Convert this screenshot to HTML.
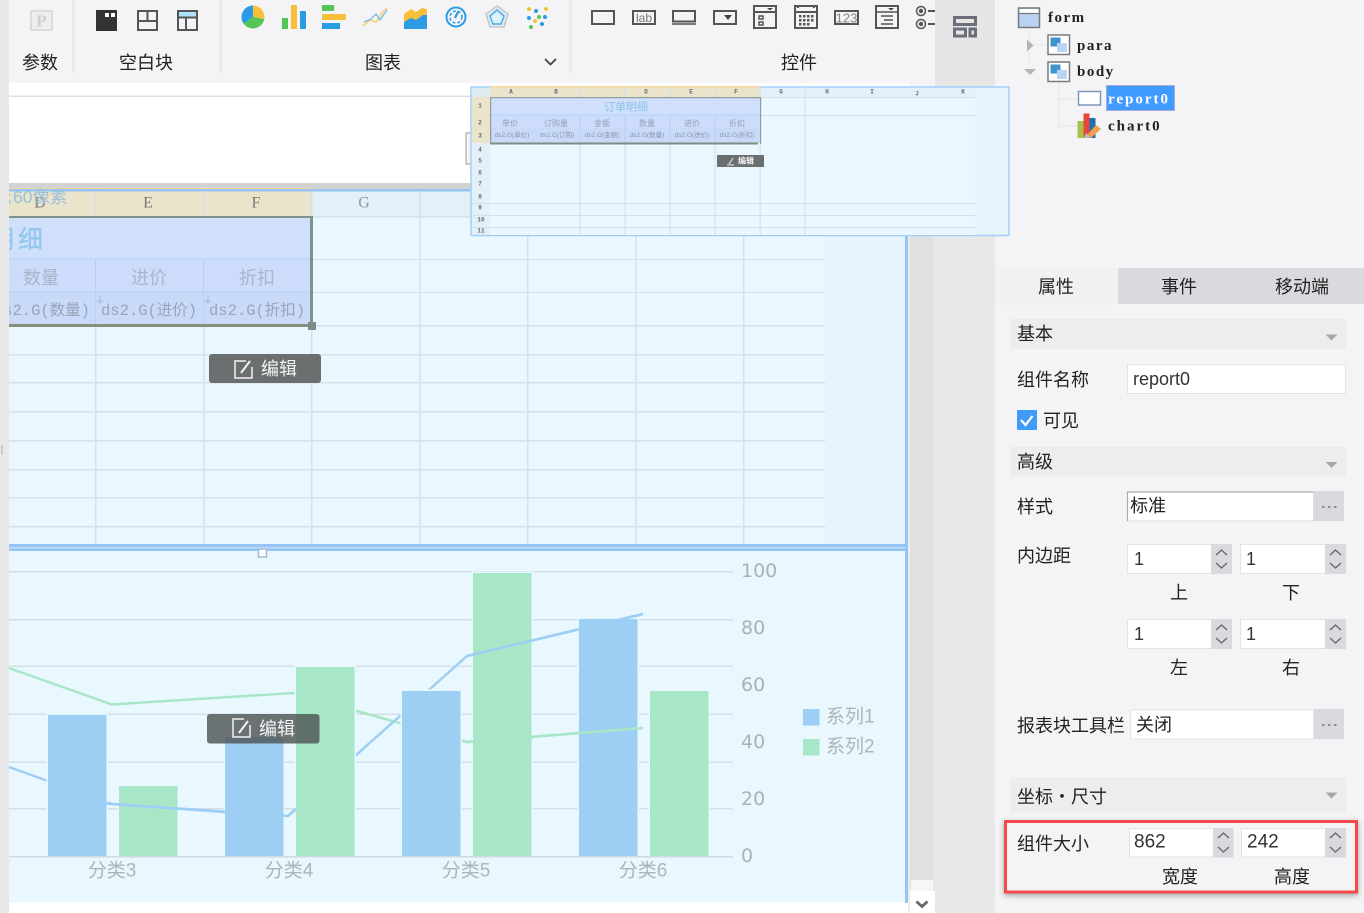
<!DOCTYPE html>
<html lang="zh">
<head>
<meta charset="utf-8">
<title>Form Designer</title>
<style>
html,body{margin:0;padding:0;width:1364px;height:913px;overflow:hidden;background:#f4f4f6}
svg{display:block;position:absolute;left:0;top:0}
text{font-family:"Liberation Sans","Noto Sans CJK SC",sans-serif;font-size:18px;fill:#222;dominant-baseline:central;transform:translateY(1px)}
.m{font-family:"Liberation Mono","Noto Sans CJK SC",monospace}
.c{text-anchor:middle}
.col{font-family:"Liberation Serif",serif;font-size:16px;text-anchor:middle}
.tree{font-family:"Liberation Serif",serif;font-size:15px;font-weight:bold;fill:#222;letter-spacing:2px}
.ax{font-family:"DejaVu Sans",sans-serif;font-size:19px;fill:#a9b2b8}
.lb{font-size:19px;fill:#adb5ba}
.hd{font-size:18px;fill:#a9b5c9}
.t6{font-size:6px;fill:#667;font-family:"Liberation Mono",monospace;font-weight:bold;text-anchor:middle}
.t7{font-size:6.500px;fill:#8896ad;text-anchor:middle}
.t9{font-size:8px;fill:#93a0b8;text-anchor:middle}
</style>
</head>
<body>
<svg width="1364" height="913" viewBox="0 0 1364 913" xmlns="http://www.w3.org/2000/svg">
<defs>
<clipPath id="cv"><rect x="9" y="180" width="900" height="400"/></clipPath>
<filter id="sh" x="-5%" y="-20%" width="110%" height="140%"><feDropShadow dx="0" dy="2" stdDeviation="3" flood-color="#000" flood-opacity=".35"/></filter>
</defs>

<!-- base -->
<rect width="1364" height="913" fill="#f4f4f6"/>
<rect x="0" y="0" width="9" height="913" fill="#e8e8e8"/>
<rect x="1" y="445" width="2" height="10" fill="#ccc"/>

<!-- toolbar -->
<rect x="9" y="0" width="926" height="83" fill="#f4f4f6"/>
<rect x="935" y="0" width="60" height="84" fill="#e6e6e6"/>
<rect x="72" y="0" width="3" height="73" fill="#ecece6"/>
<rect x="219" y="0" width="3" height="73" fill="#ecece6"/>
<rect x="569" y="0" width="3" height="73" fill="#ecece6"/>

<text x="40" y="62" class="c">参数</text>
<text x="146" y="62" class="c">空白块</text>
<text x="383" y="62" class="c">图表</text>
<text x="799" y="62" class="c">控件</text>
<path d="M545 59l5.500 5.500 5.500-5.500" fill="none" stroke="#444" stroke-width="1.800"/>

<!-- P -->
<rect x="31" y="11" width="21" height="19" fill="#eeeeee" stroke="#d4d4d4" stroke-width="1.500"/>
<text x="41.500" y="20" class="c" style="font-family:'Liberation Serif',serif;font-size:17px;font-weight:bold;fill:#cfcfcf">P</text>

<!-- blocks -->
<rect x="96" y="10" width="21" height="21" fill="#333"/>
<rect x="105" y="13" width="4" height="4" fill="#fff"/><rect x="111" y="13" width="4" height="4" fill="#fff"/>
<rect x="138" y="11" width="19" height="19" fill="none" stroke="#555" stroke-width="2"/>
<path d="M138 21h19M147.500 11v10" stroke="#555" stroke-width="2" fill="none"/>
<rect x="178" y="11" width="19" height="6" fill="#aee0f8"/>
<rect x="178" y="11" width="19" height="19" fill="none" stroke="#555" stroke-width="2"/>
<path d="M178 17.500h19M186 17.500V30" stroke="#555" stroke-width="2" fill="none"/>

<!-- chart icons -->
<path d="M253 17V5.500A11.500 11.500 0 0 1 264.300 19Z" fill="#f7bf3a"/>
<path d="M253 17l11.300 2A11.500 11.500 0 0 1 243.600 23.600Z" fill="#55c556"/>
<path d="M253 17l-9.400 6.600A11.500 11.500 0 0 1 253 5.500Z" fill="#2a9ce6"/>
<rect x="282" y="18" width="6" height="11" fill="#55c556"/>
<rect x="291" y="5" width="6" height="24" fill="#f7bf3a"/>
<rect x="300" y="11" width="6" height="18" fill="#2a9ce6"/>
<rect x="322" y="5" width="12" height="6" fill="#55c556"/>
<rect x="322" y="14" width="24" height="6" fill="#f7bf3a"/>
<rect x="322" y="23" width="18" height="6" fill="#2a9ce6"/>
<path d="M363 26l7-6 6 2 6-9 5-5" fill="none" stroke="#f7cf6a" stroke-width="1.500"/>
<path d="M364 22l7-3 5-5 4 6 7-10" fill="none" stroke="#6cbcec" stroke-width="1.300"/>
<path d="M404 18l7-4 5 2 7-8 4 4v17h-23Z" fill="#2a9ce6"/>
<path d="M404 14l7-5 5 3 6-4 5 1v6l-4 0-7 5-5-2-7 4Z" fill="#f7bf3a"/>
<circle cx="456" cy="17" r="9.500" fill="none" stroke="#2a9ce6" stroke-width="2"/>
<circle cx="456" cy="17" r="6" fill="none" stroke="#2a9ce6" stroke-width="1.500" stroke-dasharray="3 2"/>
<path d="M455 18l3.500-7" stroke="#2a9ce6" stroke-width="2.200"/>
<path d="M497 6l11 8-4 13h-14l-4-13Z" fill="#e4e8ec" stroke="#c2c8cc" stroke-width="1.500"/>
<path d="M497 10l7 6-3 8h-8l-3-8Z" fill="#dff1fb" stroke="#45b2e8" stroke-width="1.500"/>
<g>
<circle cx="529" cy="9" r="2" fill="#f7bf3a"/><circle cx="536" cy="11" r="2" fill="#2a9ce6"/><circle cx="546" cy="9" r="2" fill="#f7bf3a"/>
<circle cx="529" cy="18" r="2" fill="#2a9ce6"/><circle cx="539" cy="17" r="2" fill="#55c556"/><circle cx="545" cy="17" r="2" fill="#2a9ce6"/>
<circle cx="535" cy="21" r="2" fill="#f7bf3a"/><circle cx="542" cy="24" r="2" fill="#2a9ce6"/><circle cx="531" cy="27" r="2" fill="#55c556"/>
</g>

<!-- control icons -->
<g fill="none" stroke="#555" stroke-width="2">
<rect x="592" y="11" width="22" height="13"/>
<rect x="633" y="11" width="22" height="13"/>
<rect x="673" y="11" width="22" height="10.500"/>
<path d="M672 24h24" stroke-width="1.500"/>
<rect x="714" y="11" width="22" height="13"/>
<rect x="754" y="6" width="22" height="22"/>
<path d="M754 12h22"/>
<rect x="759" y="16" width="4" height="3" stroke-width="1.500"/><rect x="759" y="22" width="4" height="3" stroke-width="1.500"/>
<rect x="795" y="6" width="22" height="22"/>
<path d="M795 12h22"/>
<rect x="835" y="11" width="23" height="13"/>
<rect x="876" y="6" width="22" height="22"/>
<path d="M876 12h22M881 16h12M884 20h9M881 24h12" stroke-width="1.500"/>
<circle cx="921" cy="11" r="4.500" stroke-width="1.500"/>
<circle cx="921" cy="24" r="4.500" stroke-width="1.500"/>
<path d="M928 11h7M928 24h7"/>
</g>
<text x="644" y="17" class="c" style="font-size:12px;fill:#777">lab</text>
<path d="M724 15h8l-4 5Z" fill="#444"/>
<path d="M767 8h6l-3 2.500Z M888 8h6l-3 2.500Z" fill="#444"/>
<path d="M798 5v3M814 5v3" stroke="#555" stroke-width="2"/>
<g fill="#555">
<rect x="799" y="15" width="2.500" height="2.500"/><rect x="803" y="15" width="2.500" height="2.500"/><rect x="807" y="15" width="2.500" height="2.500"/><rect x="811" y="15" width="2.500" height="2.500"/>
<rect x="799" y="19" width="2.500" height="2.500"/><rect x="803" y="19" width="2.500" height="2.500"/><rect x="807" y="19" width="2.500" height="2.500"/><rect x="811" y="19" width="2.500" height="2.500"/>
<rect x="799" y="23" width="2.500" height="2.500"/><rect x="803" y="23" width="2.500" height="2.500"/><rect x="807" y="23" width="2.500" height="2.500"/>
<circle cx="921" cy="11" r="2.200"/><circle cx="921" cy="24" r="2.200"/>
</g>
<text x="846.500" y="17" class="c" style="font-size:13px;fill:#888">123</text>
<!-- layout icon -->
<g fill="none" stroke="#6c6f7a" stroke-width="3">
<rect x="954.500" y="17.500" width="21" height="7"/>
<rect x="954.500" y="29" width="11" height="7"/>
<rect x="970" y="29" width="5.500" height="7"/>
</g>

<!-- white design area -->
<rect x="9" y="83" width="899" height="830" fill="#fff"/>
<rect x="9" y="95.500" width="899" height="1.500" fill="#dedede"/>
<rect x="9" y="183" width="899" height="6" fill="#d2d2d2"/>
<rect x="908" y="84" width="25" height="829" fill="#e0e0e0"/>
<rect x="908" y="84" width="2" height="829" fill="#ececec"/>
<rect x="933" y="84" width="62" height="829" fill="#e8e8e8"/>
<rect x="995" y="268" width="123" height="37" fill="#f1f1f3"/>

<!-- report canvas -->
<rect x="9" y="189" width="896" height="356" fill="#eaf7fe"/>
<rect x="825" y="216" width="80" height="329" fill="#e6f3fb"/>
<rect x="9" y="191" width="302" height="25" fill="#e9e4ca"/>
<rect x="311" y="191" width="594" height="25" fill="#e3f0f7"/>
<rect x="9" y="188" width="302" height="2" fill="#f3d9a0"/>
<rect x="9" y="189" width="899" height="2.500" fill="#96c5f5"/>
<g fill="#d3e2e9">
<rect x="9" y="216" width="816" height="1.500"/>
<rect x="9" y="259" width="816" height="1"/>
<rect x="9" y="292" width="816" height="1"/>
<rect x="9" y="325" width="816" height="1.500"/>
<rect x="9" y="354" width="816" height="1.500"/>
<rect x="9" y="382" width="816" height="1.500"/>
<rect x="9" y="411" width="816" height="1.500"/>
<rect x="9" y="440" width="816" height="1.500"/>
<rect x="9" y="469" width="816" height="1.500"/>
<rect x="9" y="497" width="816" height="1.500"/>
<rect x="9" y="526" width="816" height="1.500"/>
<rect x="95" y="191" width="1.500" height="354"/>
<rect x="203" y="191" width="1.500" height="354"/>
<rect x="311" y="191" width="1.500" height="354"/>
<rect x="419" y="191" width="1.500" height="354"/>
<rect x="527" y="191" width="1.500" height="354"/>
<rect x="635" y="191" width="1.500" height="354"/>
<rect x="743" y="191" width="1.500" height="354"/>
</g>
<text x="40" y="202" class="col" style="fill:#777">D</text>
<text x="148" y="202" class="col" style="fill:#777">E</text>
<text x="256" y="202" class="col" style="fill:#777">F</text>
<text x="364" y="202" class="col" style="fill:#8a9aa2">G</text>

<!-- selected report block -->
<rect x="9" y="217" width="302" height="42" fill="#d0dffc"/>
<rect x="9" y="259" width="302" height="33" fill="#cddcfa"/>
<rect x="9" y="292" width="302" height="33" fill="#c9d9f8"/>
<path d="M9 259h302M9 292h302M95.500 259v66M203.500 259v66" stroke="#b6d0fb" stroke-width="1" fill="none"/>
<rect x="9" y="216" width="304" height="2" fill="#7f918d"/>
<rect x="310" y="216" width="3" height="110" fill="#7f918d"/>
<rect x="9" y="324" width="304" height="3" fill="#85907f"/>
<rect x="308" y="322" width="8" height="8" fill="#7f8a8a"/>
<g clip-path="url(#cv)">
<text x="-11" y="239" style="font-size:25px;fill:#93c9ec;font-weight:500">明</text>
<text x="18" y="239" style="font-size:25px;fill:#93c9ec;font-weight:500">细</text>
<text x="-6" y="196" style="font-size:17.500px;fill:#a4c6de">元</text>
<text x="90" y="310" class="m" text-anchor="end" style="font-size:15.500px;fill:#9aa4b8">ds2.G(数量)</text>
</g>
<text x="13" y="196" style="font-size:17.500px;fill:#9cc0dc">60像素</text>
<text x="41" y="277" class="c hd">数量</text>
<text x="149" y="277" class="c hd">进价</text>
<text x="257" y="277" class="c hd">折扣</text>
<text x="101" y="310" class="m" style="font-size:15.500px;fill:#9aa4b8">ds2.G(进价)</text>
<text x="209" y="310" class="m" style="font-size:15.500px;fill:#9aa4b8">ds2.G(折扣)</text>
<path d="M100 295v8M97 300l3 3 3-3M208 295v8M205 300l3 3 3-3" stroke="#a8c0e8" stroke-width="1.200" fill="none"/>

<!-- edit button 1 -->
<rect x="209" y="354" width="112" height="29" rx="3" fill="#6b6f70"/>
<path d="M246 361h-11v17h17v-11" fill="none" stroke="#f2f2f2" stroke-width="1.500"/>
<path d="M241 373l9-12" stroke="#f2f2f2" stroke-width="2"/>
<text x="279" y="368" class="c" style="fill:#f4f4f4">编辑</text>

<!-- divider -->
<rect x="9" y="544" width="899" height="3" fill="#96c5f5"/>
<rect x="9" y="547" width="899" height="1.500" fill="#c0dcf8"/>
<rect x="9" y="548.500" width="899" height="2.500" fill="#96c5f5"/>

<!-- chart canvas -->
<rect x="9" y="551" width="896" height="351.500" fill="#e9f7fe"/>
<g fill="#d2dfe6">
<rect x="9" y="571" width="724" height="1.500"/>
<rect x="9" y="619" width="724" height="1.500"/>
<rect x="9" y="665.500" width="724" height="1.500"/>
<rect x="9" y="713.500" width="724" height="1.500"/>
<rect x="9" y="761.500" width="724" height="1.500"/>
<rect x="9" y="808" width="724" height="1.500"/>
<rect x="9" y="856" width="724" height="1.500"/>
</g>
<polyline points="9,668 112,704.500 293,693 467,742 643,728" fill="none" stroke="#a8e6c8" stroke-width="2.500"/>
<polyline points="9,767 112,804 288,816 467,656 643,614" fill="none" stroke="#9dcff5" stroke-width="2.500"/>
<g stroke="#e9f7fe" stroke-width="3" paint-order="stroke">
<rect x="48" y="715" width="58.500" height="141.500" fill="#9dcff5"/>
<rect x="119" y="786" width="58.500" height="70.500" fill="#a8e6c8"/>
<rect x="225" y="737" width="58.500" height="119.500" fill="#9dcff5"/>
<rect x="296" y="667" width="58.500" height="189.500" fill="#a8e6c8"/>
<rect x="402" y="691" width="58.500" height="165.500" fill="#9dcff5"/>
<rect x="473" y="573" width="58.500" height="283.500" fill="#a8e6c8"/>
<rect x="579" y="619" width="58.500" height="237.500" fill="#9dcff5"/>
<rect x="650" y="691" width="58.500" height="165.500" fill="#a8e6c8"/>
</g>
<path d="M9 856.700h724" stroke="#cfdbe2" stroke-width="1.500"/>
<!-- line segments that sit above bars -->
<polyline points="106,803.600 112,804 225,812" fill="none" stroke="#9dcff5" stroke-width="2.500"/>
<polyline points="283,815.700 288,816 296,809" fill="none" stroke="#9dcff5" stroke-width="2.500"/>
<polyline points="467,656 643,614" fill="none" stroke="#9dcff5" stroke-width="2.500"/>
<polyline points="467,742 643,728" fill="none" stroke="#a8e6c8" stroke-width="2.500"/>

<text x="112" y="870" class="c lb">分类3</text>
<text x="289" y="870" class="c lb">分类4</text>
<text x="466" y="870" class="c lb">分类5</text>
<text x="643" y="870" class="c lb">分类6</text>
<text x="741" y="570" class="ax">100</text>
<text x="741" y="627" class="ax">80</text>
<text x="741" y="684" class="ax">60</text>
<text x="741" y="741" class="ax">40</text>
<text x="741" y="798" class="ax">20</text>
<text x="741" y="855" class="ax">0</text>
<rect x="803" y="709" width="16.500" height="16.500" fill="#9dcff5"/>
<rect x="803" y="739" width="16.500" height="16.500" fill="#a8e6c8"/>
<text x="826" y="716" class="lb">系列1</text>
<text x="826" y="746" class="lb">系列2</text>

<rect x="905" y="189" width="3" height="714" fill="#96c5f5"/>
<rect x="258.500" y="549" width="8" height="8" fill="#fff" stroke="#9fbcdc" stroke-width="1.500"/>

<!-- edit button 2 -->
<rect x="207" y="714" width="112.500" height="29.500" rx="3" fill="#4e5454" fill-opacity=".82"/>
<path d="M244 719h-11v18h17v-12" fill="none" stroke="#f2f2f2" stroke-width="1.500"/>
<path d="M239 733l9-12" stroke="#f2f2f2" stroke-width="2"/>
<text x="277" y="728" class="c" style="fill:#f4f4f4">编辑</text>

<!-- scroll -->
<rect x="911" y="880" width="22" height="11" fill="#f6f6f4"/>
<rect x="910" y="891" width="25" height="22" fill="#fff"/>
<path d="M916.500 901.500l5.500 5 5.500-5" fill="none" stroke="#666" stroke-width="2.800"/>

<!-- mini preview overlay -->
<rect x="466" y="133" width="8" height="31" fill="#f4f4f4" stroke="#aaa" stroke-width="1.200"/>
<rect x="471" y="83" width="438" height="4" fill="#fff"/>
<rect x="909" y="83" width="26" height="4" fill="#f4f4f6"/>
<rect x="471" y="87" width="538" height="148.500" fill="#e6f3fb" stroke="#a2cffa" stroke-width="1.500"/>
<rect x="490" y="97" width="485" height="138" fill="#ebf7fe"/>
<rect x="472" y="88" width="18" height="9" fill="#dcebf2"/>
<rect x="490" y="87" width="270" height="10" fill="#e9e4ca"/>
<rect x="760" y="88" width="215" height="9" fill="#e3f0f7"/>
<rect x="472" y="97" width="18" height="46" fill="#e9e4ca"/>
<rect x="472" y="143" width="18" height="91" fill="#e3f0f7"/>
<rect x="490" y="86" width="270" height="1.500" fill="#f3d9a0"/>
<g fill="#d3e2e9">
<rect x="760" y="97" width="215" height="1"/>
<rect x="760" y="115" width="215" height="1"/>
<rect x="472" y="203" width="503" height="1"/>
<rect x="472" y="215" width="503" height="1"/>
<rect x="472" y="227" width="503" height="1"/>
<rect x="579.500" y="87" width="1.200" height="148"/>
<rect x="624.500" y="87" width="1.200" height="148"/>
<rect x="669.500" y="87" width="1.200" height="148"/>
<rect x="714.500" y="87" width="1.200" height="148"/>
<rect x="759.500" y="87" width="1.200" height="148"/>
<rect x="804.500" y="87" width="1.200" height="148"/>
</g>
<rect x="490" y="98" width="270" height="17" fill="#d0dffc"/>
<rect x="490" y="115" width="270" height="13" fill="#cddcfa"/>
<rect x="490" y="128" width="270" height="15" fill="#c9d9f8"/>
<path d="M490 115h270M580 115v28M625 115v28M670 115v28M715 115v28" stroke="#b6d0fb" stroke-width="1" fill="none"/>
<rect x="490" y="97" width="271" height="1.200" fill="#8e9e9a"/>
<rect x="490" y="97" width="1.200" height="47" fill="#8e9e9a"/>
<rect x="760" y="97" width="1.200" height="47" fill="#8e9e9a"/>
<rect x="490" y="142.500" width="268" height="2" fill="#7f8f7f"/>
<text x="626" y="106.500" class="c" style="font-size:11px;fill:#8cc4e8">订单明细</text>
<text x="510" y="122.500" class="t9">单价</text><text x="556" y="122.500" class="t9">订购量</text><text x="602" y="122.500" class="t9">金额</text><text x="647" y="122.500" class="t9">数量</text><text x="692" y="122.500" class="t9">进价</text><text x="737" y="122.500" class="t9">折扣</text>
<text x="512" y="134.500" class="t7">ds2.G(单价)</text><text x="557" y="134.500" class="t7">ds2.G(订购)</text><text x="602" y="134.500" class="t7">ds2.G(金额)</text><text x="647" y="134.500" class="t7">ds2.G(数量)</text><text x="692" y="134.500" class="t7">ds2.G(进价)</text><text x="737" y="134.500" class="t7">ds2.G(折扣)</text>
<g>
<text x="511" y="91" class="t6">A</text><text x="556" y="91" class="t6">B</text><text x="646" y="91" class="t6">D</text><text x="691" y="91" class="t6">E</text><text x="736" y="91" class="t6">F</text>
<text x="781" y="91" class="t6">G</text><text x="827" y="91" class="t6">H</text><text x="872" y="91" class="t6">I</text><text x="917" y="93" class="t6">J</text><text x="963" y="91" class="t6">K</text>
<text x="480" y="105" class="t6">1</text><text x="480" y="122" class="t6">2</text><text x="480" y="135" class="t6">3</text><text x="480" y="149" class="t6">4</text><text x="480" y="160" class="t6">5</text><text x="480" y="172" class="t6">6</text><text x="480" y="183" class="t6">7</text><text x="480" y="196" class="t6">8</text><text x="480" y="207" class="t6">9</text><text x="481" y="219" class="t6">10</text><text x="481" y="230" class="t6">11</text>
</g>
<rect x="717" y="155" width="47" height="12" fill="#6b6f70"/>
<path d="M729 164l4-6M727 165h7" stroke="#f2f2f2" stroke-width="1"/>
<text x="746" y="160" class="c" style="font-size:8px;fill:#f4f4f4;font-weight:bold">编辑</text>

<!-- tree -->
<path d="M1029 30v34M1029 45h16M1059 83v45M1059 99h18M1059 126h18" stroke="#e4e4e6" stroke-width="1" fill="none"/>
<rect x="1018.500" y="8" width="21" height="19.500" fill="#b8d2f4" stroke="#7a7a7a" stroke-width="1.500"/>
<rect x="1019.500" y="9" width="19" height="4" fill="#fff"/>
<path d="M1019 13.500h20" stroke="#7a7a7a" stroke-width="1.200"/>
<text x="1048" y="17" class="tree" style="letter-spacing:1.500px">form</text>
<path d="M1027 39.500l6.500 6-6.500 6Z" fill="#b4b4b4"/>
<path d="M1024 69h12l-6 6Z" fill="#b4b4b4"/>
<g>
<rect x="1048" y="35" width="21.500" height="19.500" fill="#fff" stroke="#7a7a7a" stroke-width="1.500"/>
<rect x="1050.500" y="37.500" width="10" height="9" fill="#3d94cf"/><rect x="1057" y="43" width="10" height="9" fill="#bcd4f4"/>
<rect x="1048" y="62" width="21.500" height="19.500" fill="#fff" stroke="#7a7a7a" stroke-width="1.500"/>
<rect x="1050.500" y="64.500" width="10" height="9" fill="#3d94cf"/><rect x="1057" y="70" width="10" height="9" fill="#bcd4f4"/>
</g>
<text x="1077" y="45" class="tree" style="letter-spacing:1.500px">para</text>
<text x="1077" y="71" class="tree" style="letter-spacing:1.500px">body</text>
<rect x="1078.500" y="91.500" width="22" height="13.500" fill="#fff" stroke="#7d97bd" stroke-width="1.500"/>
<rect x="1106.500" y="85.500" width="68" height="25" fill="#3f9bff" stroke="#a9a9d8" stroke-width="1"/>
<text x="1108" y="98.500" class="tree" style="fill:#fff">report0</text>
<rect x="1077.500" y="121" width="7" height="17" fill="#a9c24a"/>
<rect x="1083.500" y="113.500" width="6" height="24" fill="#e8453c"/>
<rect x="1089.500" y="118" width="6" height="20" fill="#1f6fb4"/>
<path d="M1086 136l10-11 5 4-10 9Z" fill="#f2a04d"/>
<path d="M1084 138h7l-5-5Z" fill="#b9b9b9"/>
<text x="1108" y="125.500" class="tree">chart0</text>

<!-- tabs -->
<rect x="1118" y="268" width="246" height="36" fill="#d9dade"/>
<text x="1056" y="286" class="c">属性</text>
<text x="1179" y="286" class="c">事件</text>
<text x="1302" y="286" class="c">移动端</text>

<!-- section: basic -->
<rect x="1010" y="319" width="336" height="30" fill="#ededed"/>
<text x="1017" y="333">基本</text>
<path d="M1325.500 334.500h12l-6 6Z" fill="#a8a8a8"/>
<text x="1017" y="379">组件名称</text>
<rect x="1127.500" y="364.500" width="218" height="29" fill="#fff" stroke="#e3e3e3"/>
<text x="1133" y="378" style="fill:#333">report0</text>
<rect x="1017" y="410" width="20" height="20" rx="1" fill="#3f9bf5"/>
<path d="M1021 420l4.500 5 7-9" fill="none" stroke="#fff" stroke-width="2.200"/>
<text x="1043" y="420">可见</text>

<!-- section: advanced -->
<rect x="1010" y="447" width="336" height="29.500" fill="#ededed"/>
<text x="1017" y="461">高级</text>
<path d="M1325.500 462h12l-6 6Z" fill="#a8a8a8"/>
<text x="1017" y="506">样式</text>
<rect x="1127.500" y="492" width="186" height="29" fill="#fff" stroke="#dedede"/>
<path d="M1127.500 521V492h186" fill="none" stroke="#aaa" stroke-width="1.200"/>
<rect x="1314" y="491" width="30" height="30" fill="#d9dade"/>
<path d="M1322 507h2.500M1328 507h2.500M1334 507h2.500" stroke="#8f8f8f" stroke-width="2" fill="none"/>
<text x="1130" y="505">标准</text>

<text x="1017" y="555">内边距</text>

<!-- spinners -->
<g>
<rect x="1127.500" y="544.500" width="104" height="29" fill="#fff" stroke="#e3e3e3"/>
<rect x="1211" y="544" width="21" height="30" fill="#d9dade"/>
<path d="M1216 555l5.500-5 5.500 5M1216 563l5.500 5 5.500-5" fill="none" stroke="#666" stroke-width="1.300"/>
<rect x="1240.500" y="544.500" width="105" height="29" fill="#fff" stroke="#e3e3e3"/>
<rect x="1325" y="544" width="21" height="30" fill="#d9dade"/>
<path d="M1330 555l5.500-5 5.500 5M1330 563l5.500 5 5.500-5" fill="none" stroke="#666" stroke-width="1.300"/>
<rect x="1127.500" y="619.500" width="104" height="29" fill="#fff" stroke="#e3e3e3"/>
<rect x="1211" y="619" width="21" height="30" fill="#d9dade"/>
<path d="M1216 630l5.500-5 5.500 5M1216 638l5.500 5 5.500-5" fill="none" stroke="#666" stroke-width="1.300"/>
<rect x="1240.500" y="619.500" width="105" height="29" fill="#fff" stroke="#e3e3e3"/>
<rect x="1325" y="619" width="21" height="30" fill="#d9dade"/>
<path d="M1330 630l5.500-5 5.500 5M1330 638l5.500 5 5.500-5" fill="none" stroke="#666" stroke-width="1.300"/>
</g>
<text x="1134" y="558" style="fill:#333">1</text>
<text x="1246" y="558" style="fill:#333">1</text>
<text x="1134" y="633" style="fill:#333">1</text>
<text x="1246" y="633" style="fill:#333">1</text>
<text x="1179" y="592" class="c">上</text>
<text x="1291" y="592" class="c">下</text>
<text x="1179" y="667" class="c">左</text>
<text x="1291" y="667" class="c">右</text>

<text x="1017" y="725">报表块工具栏</text>
<rect x="1130.500" y="710" width="183" height="29" fill="#fff" stroke="#e3e3e3"/>
<rect x="1314" y="709" width="30" height="30" fill="#d9dade"/>
<path d="M1322 725h2.500M1328 725h2.500M1334 725h2.500" stroke="#8f8f8f" stroke-width="2" fill="none"/>
<text x="1136" y="724">关闭</text>

<rect x="1010" y="777" width="336" height="35.500" fill="#ededed"/>
<text x="1017" y="796">坐标・尺寸</text>
<path d="M1325.500 792.500h12l-6 6Z" fill="#a8a8a8"/>

<!-- highlighted size row -->
<rect x="1005.500" y="821.500" width="351" height="70.500" fill="#f4f4f6" stroke="#f44a4a" stroke-width="3" filter="url(#sh)"/>
<text x="1017" y="843">组件大小</text>
<rect x="1129.500" y="828.500" width="103" height="28.500" fill="#fff" stroke="#e3e3e3"/>
<rect x="1213" y="828" width="20.500" height="29.500" fill="#d9dade"/>
<path d="M1218 838l5.500-5 5.500 5M1218 847l5.500 5 5.500-5" fill="none" stroke="#666" stroke-width="1.300"/>
<rect x="1241.500" y="828.500" width="104" height="28.500" fill="#fff" stroke="#e3e3e3"/>
<rect x="1325" y="828" width="21" height="29.500" fill="#d9dade"/>
<path d="M1330 838l5.500-5 5.500 5M1330 847l5.500 5 5.500-5" fill="none" stroke="#666" stroke-width="1.300"/>
<text x="1134" y="841" style="fill:#333;font-size:19px">862</text>
<text x="1247" y="841" style="fill:#333;font-size:19px">242</text>
<text x="1180" y="876" class="c">宽度</text>
<text x="1292" y="876" class="c">高度</text>
</svg>
</body>
</html>
